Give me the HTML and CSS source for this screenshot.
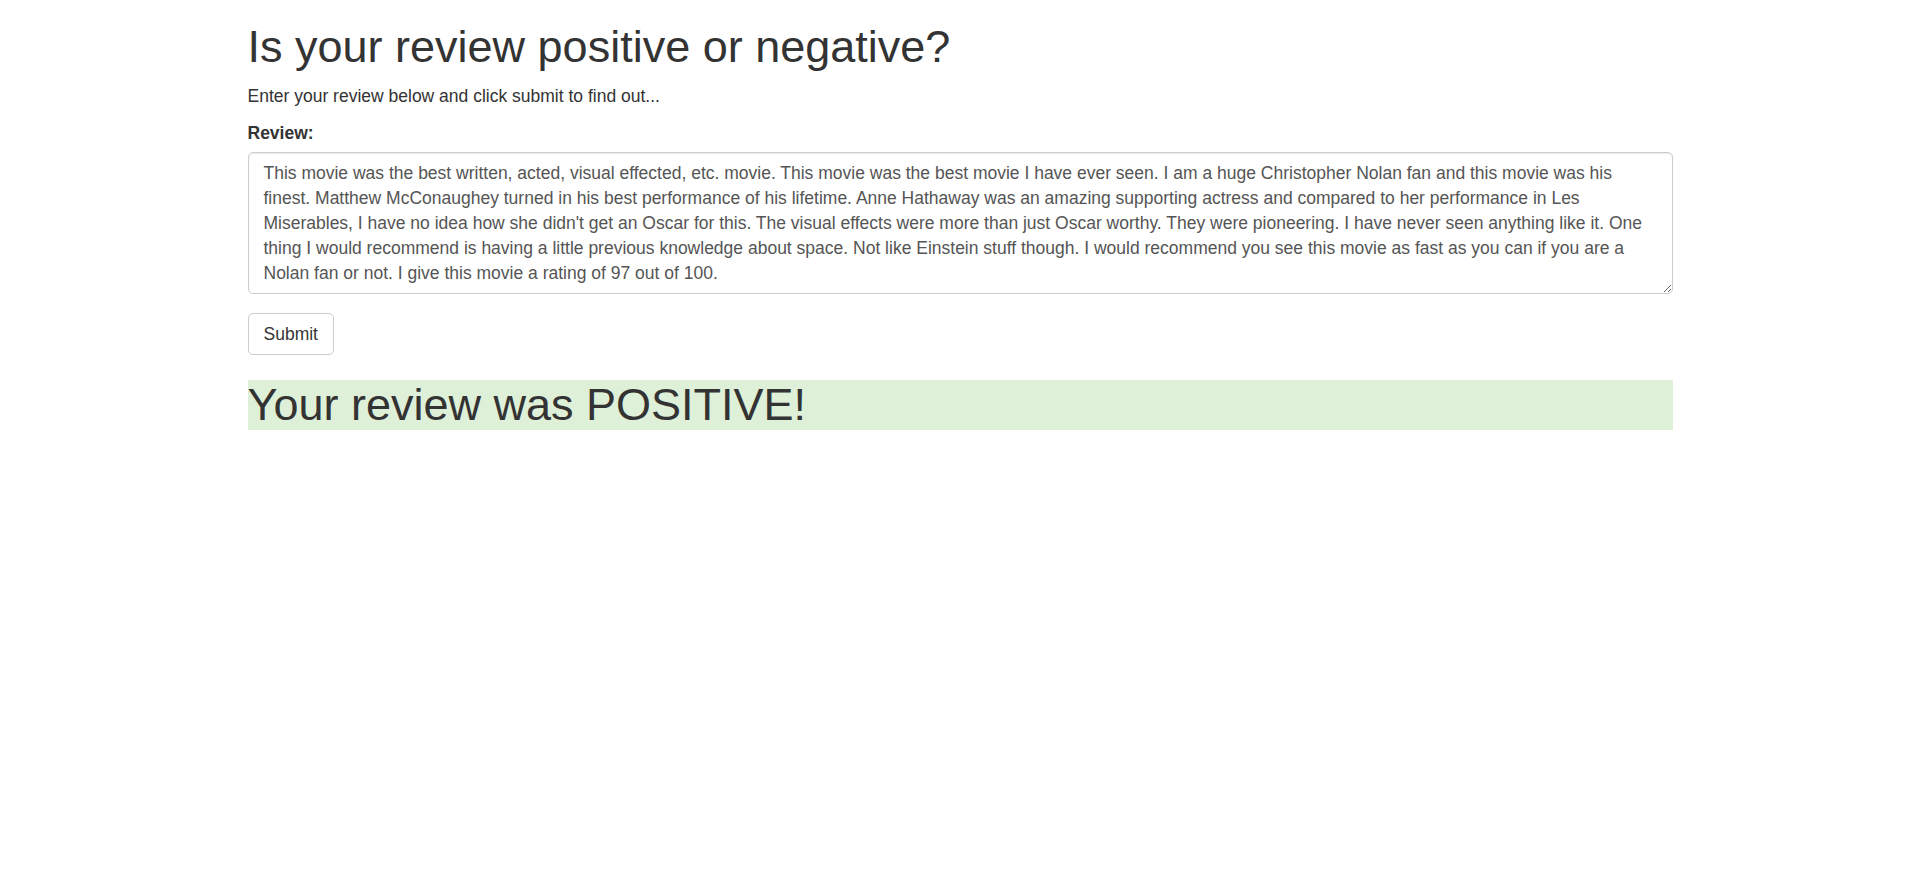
FILE: index.html
```html
<!DOCTYPE html>
<html lang="en">
<head>
<meta charset="utf-8">
<title>Review Sentiment</title>
<link rel="stylesheet" href="styles.css">
</head>
<body>
<div class="container">
  <h1 class="title page-title">Is your review positive or negative?</h1>
  <p class="intro">Enter your review below and click submit to find out...</p>
  <form class="review-form">
    <div class="form-group">
      <label class="form-label" for="review">Review:</label>
      <textarea class="form-control" id="review" rows="5">This movie was the best written, acted, visual effected, etc. movie. This movie was the best movie I have ever seen. I am a huge Christopher Nolan fan and this movie was his finest. Matthew McConaughey turned in his best performance of his lifetime. Anne Hathaway was an amazing supporting actress and compared to her performance in Les Miserables, I have no idea how she didn't get an Oscar for this. The visual effects were more than just Oscar worthy. They were pioneering. I have never seen anything like it. One thing I would recommend is having a little previous knowledge about space. Not like Einstein stuff though. I would recommend you see this movie as fast as you can if you are a Nolan fan or not. I give this movie a rating of 97 out of 100.</textarea>
    </div>
    <button type="button" class="btn">Submit</button>
  </form>
  <h1 class="title result">Your review was POSITIVE!</h1>
</div>
</body>
</html>
```

FILE: styles.css
```css
* {
  box-sizing: border-box;
}

html, body {
  margin: 0;
  padding: 0;
  background: #fff;
}

body {
  font-family: "Liberation Sans", Arial, Helvetica, sans-serif;
  font-size: 17.5px;
  line-height: 25px;
  color: #333;
}

.container {
  width: 1462.5px;
  margin: 0 auto;
  padding: 0 17.75px 0 19.75px;
}

.title {
  font-size: 45px;
  font-weight: 500;
  line-height: 1.1;
  margin: 25px 0 12.5px;
  color: #333;
}

.page-title {
  margin-top: 21.5px;
}

.intro {
  margin: 0 0 12.5px;
}

.review-form {
  margin: 0;
}

.form-group {
  margin-bottom: 18.75px;
}

.form-label {
  display: inline-block;
  font-weight: bold;
  margin-bottom: 6.25px;
}

.form-control {
  display: block;
  width: 100%;
  padding: 7.5px 15px;
  font-family: inherit;
  font-size: 17.5px;
  line-height: 25px;
  color: #555;
  background: #fff;
  border: 1.25px solid #ccc;
  border-radius: 5px;
  box-shadow: inset 0 1.25px 1.25px rgba(0, 0, 0, 0.075);
  margin: 0;
  resize: vertical;
}

.btn {
  display: inline-block;
  padding: 7.5px 15px;
  font-family: inherit;
  font-size: 17.5px;
  line-height: 25px;
  color: #333;
  background: #fff;
  border: 1.25px solid #ccc;
  border-radius: 5px;
  margin: 0;
  cursor: pointer;
}

.result {
  background: #dff0d8;
}
```
